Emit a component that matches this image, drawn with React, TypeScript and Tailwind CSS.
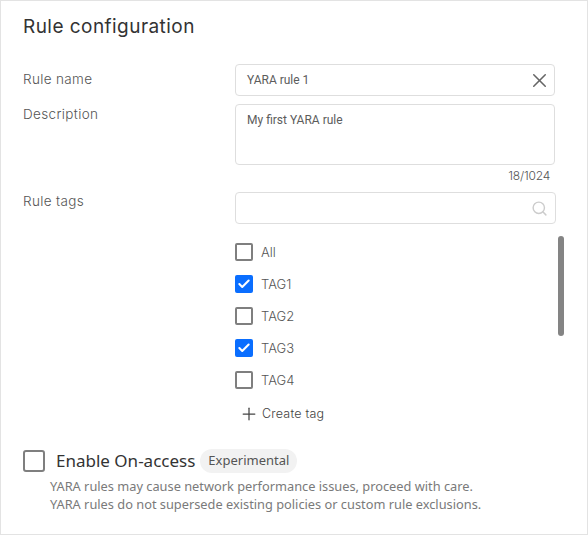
import { Check, Plus, Search, X } from "lucide-react";

const TAGS = [
  { name: "All", checked: false },
  { name: "TAG1", checked: true },
  { name: "TAG2", checked: false },
  { name: "TAG3", checked: true },
  { name: "TAG4", checked: false },
];

const LABEL = "font-['Inter',sans-serif] font-light text-[13.5px] tracking-[0.35px] text-[#555555]";

function TagRow({ name, checked }: { name: string; checked: boolean }) {
  return (
    <div className="flex h-[32px] items-center">
      {checked ? (
        <span className="flex h-[18px] w-[18px] items-center justify-center rounded-[2px] bg-[#0a6eff] pb-[1px]">
          <Check size={14} strokeWidth={3.5} className="text-white" />
        </span>
      ) : (
        <span className="h-[18px] w-[18px] rounded-[2px] border-2 border-[#7f7f7f] bg-white" />
      )}
      <span className="ml-[8px] pt-[2px] font-['Inter',sans-serif] text-[13px] font-light tracking-[0px] text-[#555555]">
        {name}
      </span>
    </div>
  );
}

export default function App() {
  return (
    <div className="flex h-[535px] w-[588px] flex-col border border-[#e3e3e3] bg-white pl-[22px] font-['Roboto',sans-serif]">
      <h1 className="mt-[14px] h-[24px] font-['Inter',sans-serif] text-[19px] font-normal leading-[24px] tracking-[0.45px] text-[#333333]">
        Rule configuration
      </h1>

      <div className="mt-[25px] flex h-[32px]">
        <div className={`w-[212px] pt-[6px] leading-[18px] ${LABEL}`}>Rule name</div>
        <div className="flex h-[32px] w-[320px] items-center justify-between rounded-[4px] border border-[#dedede] pl-[11px] pr-[3px] text-[12px] text-[#5c5c5c]">
          <span>YARA rule 1</span>
          <X size={23} strokeWidth={1.6} className="text-[#666666]" />
        </div>
      </div>

      <div className="mt-[8px] flex h-[61px]">
        <div className={`w-[212px] pt-[1px] leading-[18px] ${LABEL}`}>Description</div>
        <div className="h-[61px] w-[320px] rounded-[4px] border border-[#dedede] px-[11px] pt-[8px] text-[12px] leading-[14px] text-[#5c5c5c]">
          My first YARA rule
        </div>
      </div>
      <div className="flex h-[27px] w-[527px] items-center justify-end pb-[5px] font-['Inter',sans-serif] text-[12px] font-light tracking-[-0.2px] text-[#555555]">
        18/1024
      </div>

      <div className="flex h-[32px]">
        <div className={`w-[212px] leading-[18px] ${LABEL}`}>Rule tags</div>
        <div className="flex h-[32px] w-[321px] items-center justify-end rounded-[4px] border border-[#dedede] pr-[7px]">
          <Search size={17} strokeWidth={2} className="text-[#cccccc]" />
        </div>
      </div>

      <div className="relative ml-[212px] mt-[12px] flex w-[329px] flex-col">
        {TAGS.map((tag) => (
          <TagRow key={tag.name} name={tag.name} checked={tag.checked} />
        ))}
        <span className="absolute right-0 top-0 h-[100px] w-[6px] rounded-[3px] bg-[#848484]" />
      </div>

      <div className="ml-[216px] mt-[2px] flex h-[32px] items-center gap-[3px]">
        <Plus size={20} strokeWidth={1.5} className="text-[#444444]" />
        <span className="font-['Inter',sans-serif] text-[12.5px] font-light tracking-[0.2px] text-[#444444]">
          Create tag
        </span>
      </div>

      <div className="mt-[19px] flex h-[24px] items-center">
        <span className="h-[22px] w-[22px] rounded-[3px] border-2 border-[#7f7f7f] bg-white" />
        <span className="ml-[11px] font-['Noto_Sans',sans-serif] text-[17px] text-[#333333]">Enable On-access</span>
        <span className="ml-[5px] flex h-[24px] w-[97px] items-center justify-center rounded-full bg-[#f2f2f2] font-['Noto_Sans',sans-serif] text-[13px] text-[#555555]">
          Experimental
        </span>
      </div>
      <p className="ml-[27px] mt-[4px] font-['Noto_Sans',sans-serif] text-[12.8px] leading-[18px] text-[#7a7a7a]">
        YARA rules may cause network performance issues, proceed with care.
        <br />
        YARA rules do not supersede existing policies or custom rule exclusions.
      </p>
    </div>
  );
}
